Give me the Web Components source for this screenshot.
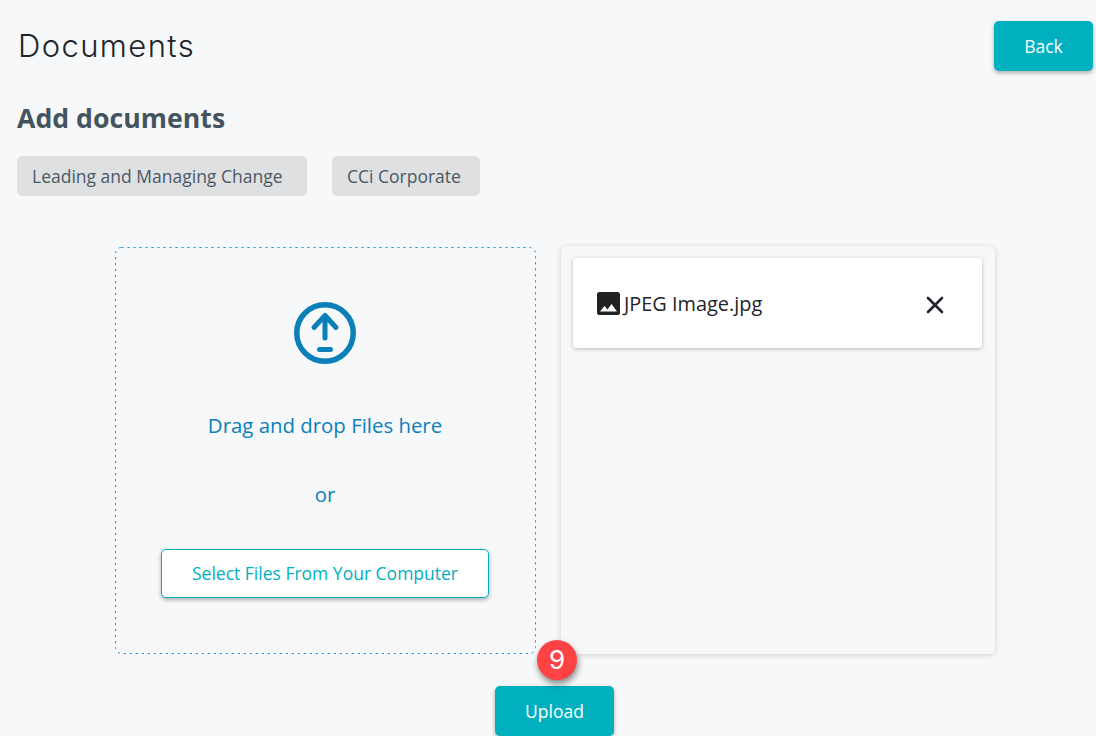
<!DOCTYPE html>
<html lang="en">
<head>
<meta charset="utf-8">
<title>Documents</title>
<style>
  html, body { margin: 0; height: 100%; overflow: hidden; }
  body { background: #f7f8fa; font-family: "Open Sans", sans-serif; }
</style>
</head>
<body>
<docs-page>
  <span slot="title">Documents</span>
  <span slot="subtitle">Add documents</span>
  <doc-chip slot="chips" style="width: 290px">Leading and Managing Change</doc-chip>
  <doc-chip slot="chips" style="width: 148px">CCi Corporate</doc-chip>
  <drop-zone slot="drop"></drop-zone>
  <file-panel slot="files">
    <file-item>JPEG Image.jpg</file-item>
  </file-panel>
</docs-page>

<script>
class DocButton extends HTMLElement {
  constructor() {
    super();
    this.attachShadow({ mode: 'open' }).innerHTML = `
      <style>
        :host {
          display: inline-flex;
          align-items: center;
          justify-content: center;
          box-sizing: border-box;
          height: 50px;
          width: var(--btn-width, 99px);
          background: #00b0bf;
          color: #fff;
          border-radius: 5px;
          font: 17.5px/24px "Open Sans", sans-serif;
          box-shadow: 0 2px 4px rgba(0, 0, 0, 0.3);
        }
      </style>
      <slot></slot>`;
  }
}

class DocChip extends HTMLElement {
  constructor() {
    super();
    this.attachShadow({ mode: 'open' }).innerHTML = `
      <style>
        :host {
          display: inline-flex;
          align-items: center;
          box-sizing: border-box;
          height: 40px;
          padding-left: 15px;
          background: #dfe0e2;
          color: #4a5965;
          border-radius: 5px;
          font: 17.5px/24px "Open Sans", sans-serif;
          white-space: nowrap;
        }
      </style>
      <slot></slot>`;
  }
}

class DropZone extends HTMLElement {
  constructor() {
    super();
    this.attachShadow({ mode: 'open' }).innerHTML = `
      <style>
        :host {
          display: flex;
          flex-direction: column;
          align-items: center;
          position: relative;
          box-sizing: border-box;
          width: 421px;
          height: 407px;
          margin-top: 1px;
          padding-right: 1px;
          color: #0a7fb8;
          font: 20.4px/26px "Open Sans", sans-serif;
        }
        .edge { position: absolute; left: 0; top: 0; }
        .icon { display: block; margin-top: 55px; }
        .drag { margin-top: 48px; }
        .or { margin-top: 43px; }
        .select {
          box-sizing: border-box;
          width: 328px;
          height: 49px;
          margin-top: 42px;
          padding-bottom: 2px;
          display: flex;
          align-items: center;
          justify-content: center;
          background: #fff;
          border: 1px solid #00b0bf;
          border-radius: 5px;
          color: #00b0bf;
          font-size: 17.5px;
          box-shadow: 0 2px 4px rgba(0, 0, 0, 0.3);
        }
      </style>
      <svg class="edge" width="421" height="407" fill="none">
        <rect x="0.5" y="0.5" width="420" height="406" rx="6" stroke="#0a8fd0" stroke-dasharray="2 4"/>
      </svg>
      <svg class="icon" width="62" height="62" viewBox="0 0 62 62" fill="none" stroke="#0a7fb8" stroke-linecap="round" stroke-linejoin="round">
        <circle cx="31" cy="31" r="28.25" stroke-width="5.5"/>
        <path d="M31 36V13.5M20 25.5 31 13.5l11 12" stroke-width="5"/>
        <path d="M25.5 47.5h11" stroke-width="5"/>
      </svg>
      <div class="drag">Drag and drop Files here</div>
      <div class="or">or</div>
      <div class="select">Select Files From Your Computer</div>`;
  }
}

class FilePanel extends HTMLElement {
  constructor() {
    super();
    this.attachShadow({ mode: 'open' }).innerHTML = `
      <style>
        :host {
          display: block;
          box-sizing: border-box;
          width: 434px;
          height: 408px;
          padding: 12px 13px 12px 12px;
          background: #f7f8fa;
          border-radius: 6px;
          box-shadow: 0 1px 6px rgba(0, 0, 0, 0.16);
        }
      </style>
      <slot></slot>`;
  }
}

class FileItem extends HTMLElement {
  constructor() {
    super();
    this.attachShadow({ mode: 'open' }).innerHTML = `
      <style>
        :host {
          display: flex;
          align-items: center;
          box-sizing: border-box;
          height: 90px;
          padding: 0 36px 0 24px;
          background: #fff;
          border-radius: 4px;
          color: #212529;
          font: 19.9px/28px "Open Sans", sans-serif;
          box-shadow: 0 1px 4px rgba(0, 0, 0, 0.25);
        }
        .name { flex: 1; margin-left: 4px; padding-top: 2px; }
        svg { display: block; }
        .close { margin-top: 4px; }
      </style>
      <svg width="23" height="23" viewBox="0 0 23 23">
        <rect width="23" height="23" rx="2.5" fill="#212121"/>
        <path d="M3 19.5 7.5 14l3 3.5 4-5.5 5.5 7.5z" fill="#fff"/>
      </svg>
      <span class="name"><slot></slot></span>
      <svg class="close" width="22" height="22" viewBox="0 0 22 22" fill="none" stroke="#212529" stroke-width="2.6" stroke-linecap="round">
        <path d="M4 4 18 18M18 4 4 18"/>
      </svg>`;
  }
}

class DocsPage extends HTMLElement {
  constructor() {
    super();
    this.attachShadow({ mode: 'open' }).innerHTML = `
      <style>
        :host {
          display: block;
          position: relative;
          box-sizing: border-box;
          height: 736px;
          overflow: hidden;
          padding: 21px 3px 0 17px;
        }
        header {
          display: flex;
          justify-content: space-between;
          align-items: center;
          height: 50px;
        }
        h1 {
          margin: 0 0 0 1px;
          font: 300 31px/40px Inter, "Open Sans", sans-serif;
          letter-spacing: 1.4px;
          color: #212529;
        }
        h2 {
          margin: 29px 0 0;
          font: 700 26.7px/36px "Open Sans", sans-serif;
          color: #44545f;
        }
        .chips { display: flex; gap: 25px; margin-top: 20px; }
        .work { display: flex; gap: 25px; margin: 50px 0 0 98px; }
        .foot { display: flex; margin: 32px 0 0 478px; }
        .foot doc-button { --btn-width: 119px; }
        .badge {
          position: absolute;
          left: 537px;
          top: 640px;
          width: 40px;
          height: 40px;
          display: flex;
          align-items: center;
          justify-content: center;
          border-radius: 50%;
          background: #ff4345;
          color: #fff;
          font: 26px/40px Inter, sans-serif;
          box-shadow: 1px 4px 6px rgba(0, 0, 0, 0.45);
        }
      </style>
      <header>
        <h1><slot name="title"></slot></h1>
        <doc-button>Back</doc-button>
      </header>
      <h2><slot name="subtitle"></slot></h2>
      <div class="chips"><slot name="chips"></slot></div>
      <div class="work">
        <slot name="drop"></slot>
        <slot name="files"></slot>
      </div>
      <div class="foot"><doc-button>Upload</doc-button></div>
      <div class="badge">9</div>`;
  }
}

customElements.define('doc-button', DocButton);
customElements.define('doc-chip', DocChip);
customElements.define('drop-zone', DropZone);
customElements.define('file-panel', FilePanel);
customElements.define('file-item', FileItem);
customElements.define('docs-page', DocsPage);
</script>
</body>
</html>
